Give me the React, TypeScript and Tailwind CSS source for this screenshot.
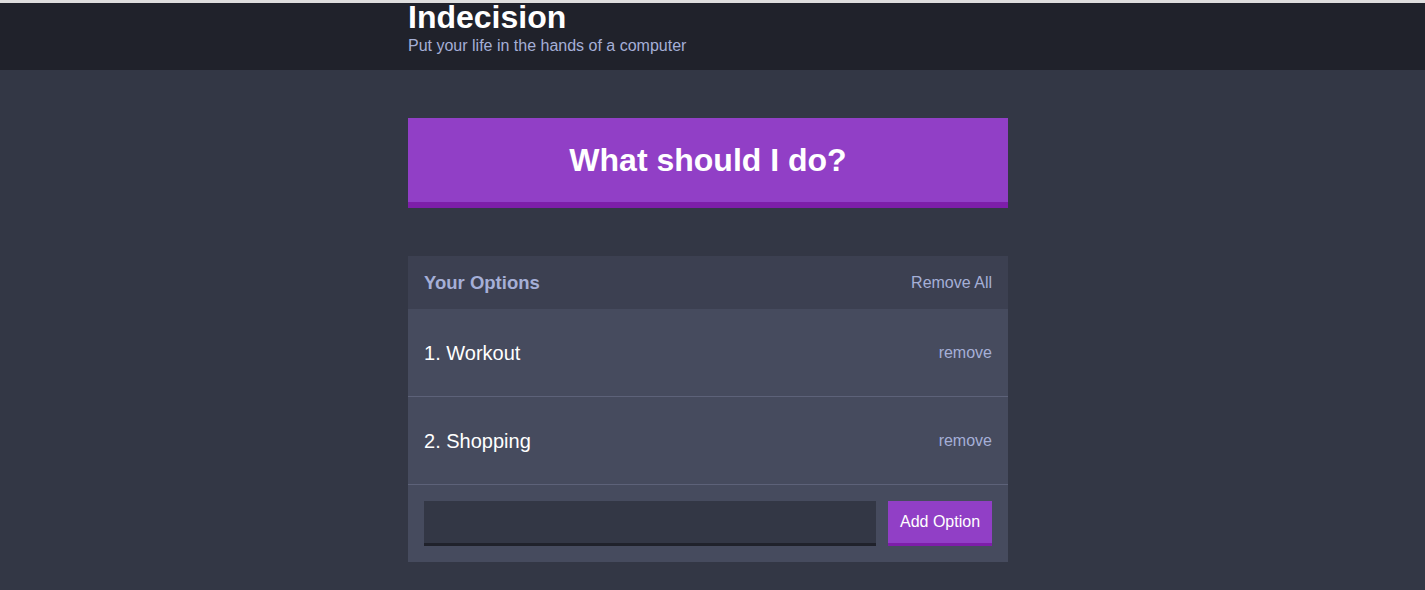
import React from "react";

export default function App() {
  const options = ["Workout", "Shopping"];
  return (
    <div className="min-h-screen bg-[#333745] font-['Liberation_Sans',Arial,sans-serif]">
      <div className="h-[3px] bg-[#dedede]" />
      <header className="h-[67px] bg-[#20222b] pr-[9px]">
        <div className="w-[600px] mx-auto">
          <h1 className="text-[32px] leading-[28px] font-bold text-white">Indecision</h1>
          <h2 className="mt-[5px] text-[16px] leading-[20px] text-[#a5afd7]">
            Put your life in the hands of a computer
          </h2>
        </div>
      </header>
      <div className="pr-[9px]">
        <div className="w-[600px] mx-auto">
          <button className="mt-[48px] block w-full h-[90px] bg-[#913fc6] border-b-[6px] border-[#7d1ea9] text-white text-[32px] leading-[32px] font-bold">
            What should I do?
          </button>
          <div className="mt-[48px] bg-[#464b5e]">
            <div className="h-[53px] bg-[#3c4051] flex items-center justify-between px-4">
              <h3 className="text-[18.5px] font-bold text-[#a5afd7]">Your Options</h3>
              <button className="text-[16px] text-[#a5afd7]">Remove All</button>
            </div>
            {options.map((o, i) => (
              <div
                key={o}
                className="h-[88px] flex items-center justify-between px-4 border-b border-[#5d6279]"
              >
                <p className="text-[20px] text-white">
                  {i + 1}. {o}
                </p>
                <button className="text-[16px] text-[#a5afd7]">remove</button>
              </div>
            ))}
            <form className="flex gap-3 p-4">
              <input
                type="text"
                className="flex-1 h-[45px] bg-[#333745] border-b-[3px] border-[#20222b] outline-none text-white px-2"
              />
              <button
                type="button"
                className="w-[104px] h-[45px] bg-[#913fc6] border-b-[3px] border-[#7d1ea9] text-white text-[16px]"
              >
                Add Option
              </button>
            </form>
          </div>
        </div>
      </div>
    </div>
  );
}
